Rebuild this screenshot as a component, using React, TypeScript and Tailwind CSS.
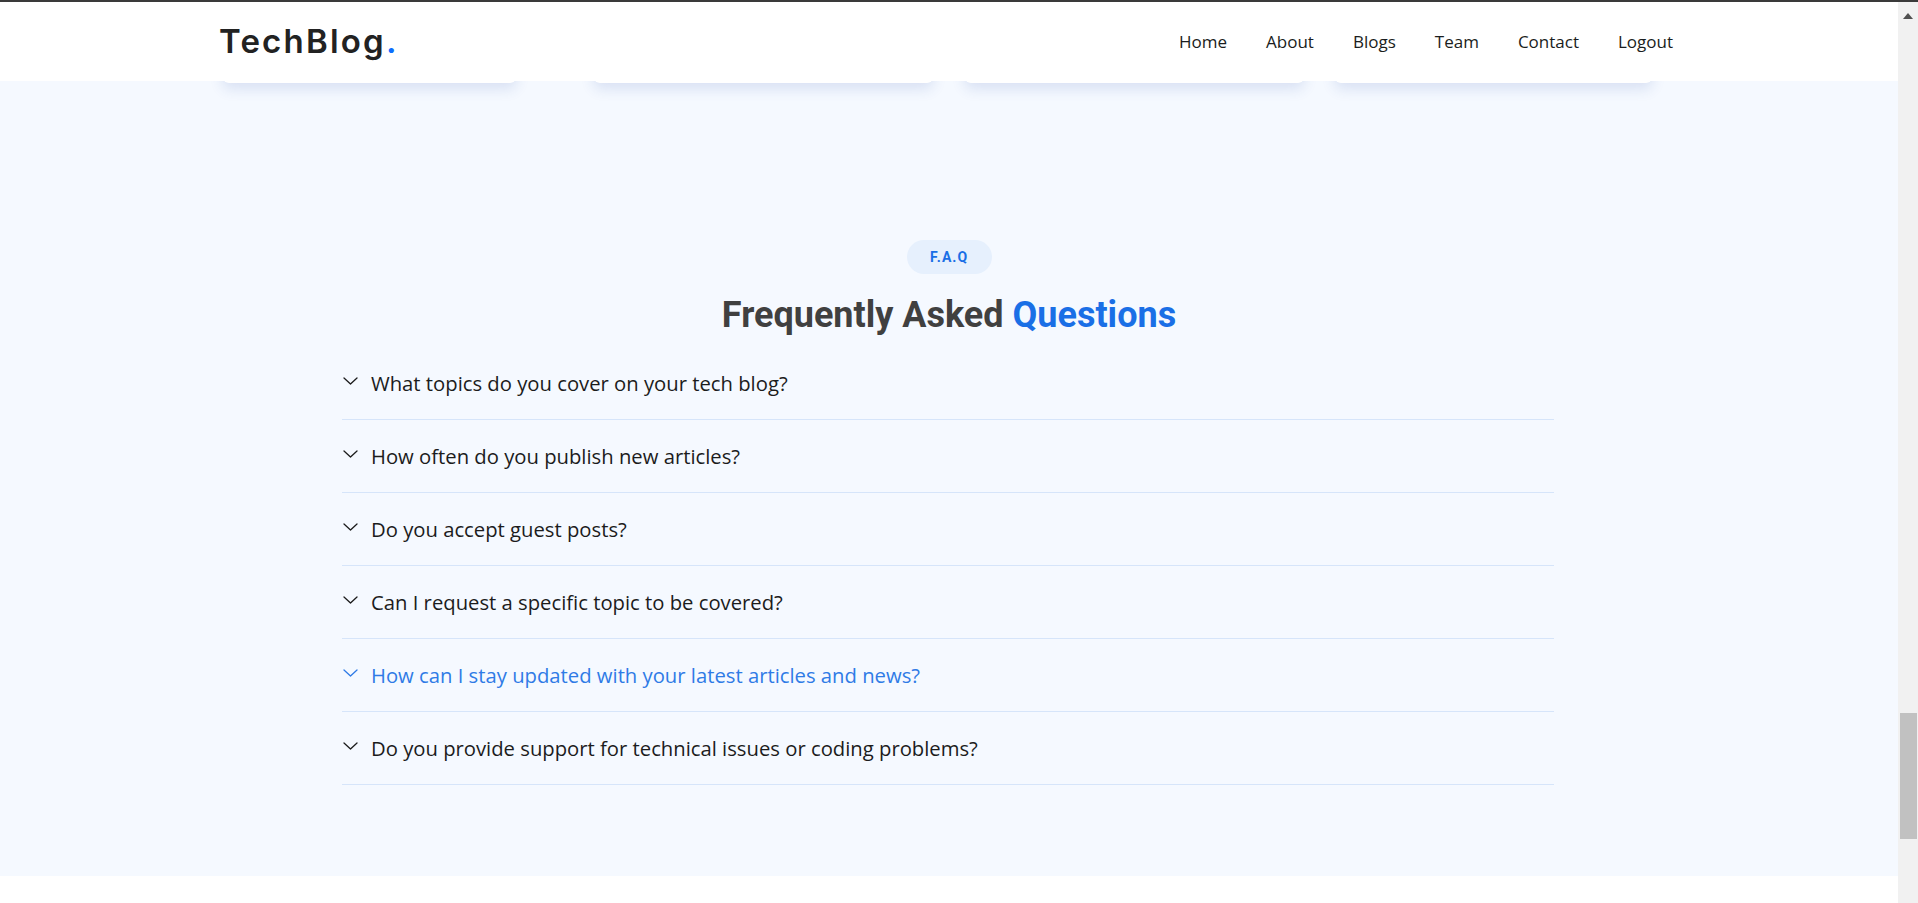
import React from "react";

const questions = [
  "What topics do you cover on your tech blog?",
  "How often do you publish new articles?",
  "Do you accept guest posts?",
  "Can I request a specific topic to be covered?",
  "How can I stay updated with your latest articles and news?",
  "Do you provide support for technical issues or coding problems?",
];

function Chevron({ className }: { className?: string }) {
  return (
    <svg width="15" height="8" viewBox="0 0 15 8" fill="none" className={className}>
      <path d="M1 1 L7.5 7 L14 1" stroke="currentColor" strokeWidth="1.3" strokeLinecap="round" strokeLinejoin="round" />
    </svg>
  );
}

export default function App() {
  return (
    <div className="w-[1918px] h-[903px] overflow-hidden flex flex-col bg-white">
      <div className="h-[2px] bg-[#3a3a3a] shrink-0" />
      <div className="flex flex-1 min-h-0">
        <main className="flex-1 min-w-0 flex flex-col">
          <header className="relative z-10 h-[79px] bg-white shrink-0">
            <div className="w-[1456px] mx-auto h-full flex items-center justify-between">
              <div
                className="-ml-[2px] text-[33px] font-semibold tracking-[2.2px] text-[#222222] leading-none"
                style={{ fontFamily: "Inter, 'Noto Sans', sans-serif" }}
              >
                TechBlog<span className="text-[#0d6efd]">.</span>
              </div>
              <nav
                className="flex items-center gap-[39px] pr-[4px] text-[17px] font-medium text-[#1a1d20]"
                style={{ fontFamily: "'Open Sans', sans-serif" }}
              >
                <span>Home</span>
                <span>About</span>
                <span>Blogs</span>
                <span>Team</span>
                <span>Contact</span>
                <span>Logout</span>
              </nav>
            </div>
          </header>

          <section className="bg-[#f5f9ff] flex flex-col items-center">
            <div className="w-full flex -mt-[40px] h-[42px]">
              <div className="ml-[223px] w-[293px] bg-white rounded-b-[6px] shadow-[0_6px_14px_rgba(40,80,170,0.14)]" />
              <div className="ml-[78px] w-[339px] bg-white rounded-b-[6px] shadow-[0_6px_14px_rgba(40,80,170,0.14)]" />
              <div className="ml-[32px] w-[339px] bg-white rounded-b-[6px] shadow-[0_6px_14px_rgba(40,80,170,0.14)]" />
              <div className="ml-[31px] w-[317px] bg-white rounded-b-[6px] shadow-[0_6px_14px_rgba(40,80,170,0.14)]" />
            </div>

            <div
              className="mt-[157px] h-[34px] w-[85px] rounded-full bg-[#e6f0fd] flex items-center justify-center text-[14px] font-bold tracking-[1px] text-[#1a6fe6]"
              style={{ fontFamily: "Roboto, sans-serif" }}
            >
              F.A.Q
            </div>
            <h2
              className="mt-[20px] text-[36px] leading-[43px] font-bold text-[#404040]"
              style={{ fontFamily: "Roboto, sans-serif" }}
            >
              Frequently Asked <span className="text-[#1a6fe6]">Questions</span>
            </h2>

            <div className="mt-[10px] w-[1212px] -translate-x-[1px] pb-[91px]" style={{ fontFamily: "'Open Sans', sans-serif" }}>
              {questions.map((q, i) => {
                const active = i === 4;
                return (
                  <div key={q} className="border-b border-[#d6e5fa]">
                    <button
                      className={
                        "w-full h-[72px] flex items-center pl-[1px] text-left text-[20.25px] " +
                        (active ? "text-[#2f7be6]" : "text-[#1c1c1c]")
                      }
                    >
                      <Chevron className="mr-[13px] -mt-[4px] shrink-0" />
                      <span>{q}</span>
                    </button>
                  </div>
                );
              })}
            </div>
          </section>
          <div className="flex-1 bg-white" />
        </main>

        <aside className="w-[20px] shrink-0 bg-[#f1f1f1] flex flex-col items-center">
          <svg width="10" height="6" viewBox="0 0 10 6" className="mt-[11px] shrink-0">
            <path d="M0 6 L5 0 L10 6 Z" fill="#505050" />
          </svg>
          <div className="mt-[694px] w-[17px] h-[126px] bg-[#c1c1c1] ml-[1px]" />
        </aside>
      </div>
    </div>
  );
}
